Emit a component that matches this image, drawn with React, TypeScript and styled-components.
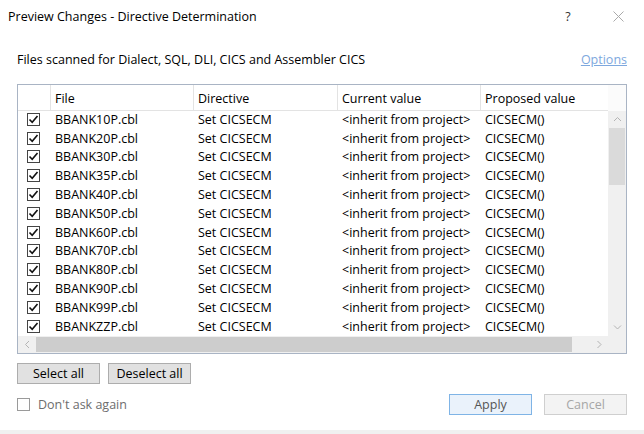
import React from "react";
import styled, { createGlobalStyle } from "styled-components";

const Global = createGlobalStyle`
  html, body { margin: 0; padding: 0; background: #fff; }
  body { font-family: "Open Sans", "Noto Sans", sans-serif; font-size: 12.5px; color: #000; }
  * { box-sizing: border-box; }
`;

const Dialog = styled.div`
  width: 644px;
  height: 434px;
  display: flex;
  flex-direction: column;
  background: #fff;
  overflow: hidden;
`;

const TitleBar = styled.div`
  height: 32px;
  display: flex;
  align-items: center;
  padding-left: 8px;
  padding-right: 3px;
`;

const Title = styled.div`
  flex: 1;
  color: #000;
`;

const TitleButton = styled.div<{ $w: number }>`
  width: ${(p) => p.$w}px;
  height: 32px;
  display: flex;
  align-items: center;
  justify-content: center;
  color: #333;
`;

const IntroRow = styled.div`
  margin-top: 17px;
  height: 20px;
  padding: 0 17px;
  display: flex;
  align-items: center;
  justify-content: space-between;
`;

const OptionsLink = styled.span`
  color: #7ea8de;
  text-decoration: underline;
`;

const GridFrame = styled.div`
  margin: 15px 17px 0 17px;
  height: 270px;
  border: 1px solid #a9b4c4;
  display: grid;
  grid-template-columns: 1fr 18px;
  grid-template-rows: 26px 1fr 17px;
  overflow: hidden;
`;

const cols = "33px 143px 144px 143px 126px";

const HeaderRow = styled.div`
  display: grid;
  grid-template-columns: ${cols};
  border-bottom: 1px solid #e3e3e3;
  background: #fff;
`;

const HeaderCell = styled.div`
  display: flex;
  align-items: center;
  padding-left: 4px;
  padding-top: 1px;
  border-right: 1px solid #e3e3e3;
  white-space: nowrap;
  overflow: hidden;
  &:last-child { border-right: none; }
`;

const CornerTop = styled.div`
  background: #fbfbfb;
`;

const Body = styled.div`
  overflow: hidden;
  margin-top: -1px;
`;

const Row = styled.div`
  display: grid;
  grid-template-columns: ${cols};
  height: 18.8px;
  align-items: center;
`;

const Cell = styled.div`
  padding-left: 4px;
  white-space: nowrap;
  overflow: hidden;
`;

const CheckCell = styled.div`
  display: flex;
  align-items: center;
  padding-left: 9px;
`;

const Box = styled.div<{ $light?: boolean }>`
  width: 13px;
  height: 13px;
  border: 1px solid ${(p) => (p.$light ? "#9a9a9a" : "#444")};
  background: #fff;
  display: flex;
  align-items: center;
  justify-content: center;
`;

const VScroll = styled.div`
  background: #f0f0f0;
  display: flex;
  flex-direction: column;
`;

const ArrowBtn = styled.div`
  width: 18px;
  height: 17px;
  display: flex;
  align-items: center;
  justify-content: center;
  flex: none;
`;

const VTrack = styled.div`
  flex: 1;
  padding: 0 1px;
`;

const VThumb = styled.div`
  height: 57px;
  background: #dadada;
`;

const HScroll = styled.div`
  background: #f0f0f0;
  display: flex;
  align-items: stretch;
`;

const HTrack = styled.div`
  flex: 1;
  padding: 1px 0;
`;

const HThumb = styled.div`
  width: 536px;
  height: 100%;
  background: #cdcdcd;
`;

const CornerBottom = styled.div`
  background: #f0f0f0;
`;

const ButtonRow = styled.div`
  margin: 9px 17px 0 17px;
  display: flex;
  gap: 8px;
`;

const Button = styled.button<{ $variant?: "default" | "primary" | "disabled" }>`
  width: 83px;
  height: 21px;
  font-family: inherit;
  font-size: 12.5px;
  padding: 0;
  background: ${(p) => (p.$variant === "primary" ? "#eaf2fb" : p.$variant === "disabled" ? "#f3f3f3" : "#e1e1e1")};
  border: 1px solid ${(p) => (p.$variant === "primary" ? "#7fb4e6" : p.$variant === "disabled" ? "#cfcfcf" : "#adadad")};
  color: ${(p) => (p.$variant === "primary" ? "#555" : p.$variant === "disabled" ? "#a6a6a6" : "#000")};
`;

const Footer = styled.div`
  margin: 10px 17px 0 17px;
  display: flex;
  align-items: center;
`;

const DontAsk = styled.label`
  flex: 1;
  display: flex;
  align-items: center;
  gap: 8px;
  color: #6d6d6d;
`;

const FooterButtons = styled.div`
  display: flex;
  gap: 12px;
`;

const BottomEdge = styled.div`
  margin-top: auto;
  height: 4px;
  background: #f0f0f0;
`;

const Check = () => (
  <svg width="11" height="11" viewBox="0 0 11 11">
    <path d="M1.5 5.5 L4.2 8.3 L9.5 2" fill="none" stroke="#111" strokeWidth="1.6" />
  </svg>
);

const Chevron = ({ dir }: { dir: "up" | "down" | "left" | "right" }) => {
  const d =
    dir === "up" ? "M1 5 L4.5 1.5 L8 5" :
    dir === "down" ? "M1 1.5 L4.5 5 L8 1.5" :
    dir === "left" ? "M5 1 L1.5 4.5 L5 8" : "M1.5 1 L5 4.5 L1.5 8";
  const w = dir === "up" || dir === "down" ? 9 : 7;
  const h = dir === "up" || dir === "down" ? 7 : 9;
  return (
    <svg width={w} height={h} viewBox={`0 0 ${w} ${h}`}>
      <path d={d} fill="none" stroke="#b4b4b4" strokeWidth="1" />
    </svg>
  );
};

const files = ["10", "20", "30", "35", "40", "50", "60", "70", "80", "90", "99", "ZZ"];

export default function App() {
  return (
    <>
      <Global />
      <Dialog>
        <TitleBar>
          <Title>Preview Changes - Directive Determination</Title>
          <TitleButton $w={54}>?</TitleButton>
          <TitleButton $w={46}>
            <svg width="11" height="11" viewBox="0 0 11 11">
              <path d="M0.5 0.5 L10.5 10.5 M10.5 0.5 L0.5 10.5" stroke="#aaa" strokeWidth="1" />
            </svg>
          </TitleButton>
        </TitleBar>
        <IntroRow>
          <span>Files scanned for Dialect, SQL, DLI, CICS and Assembler CICS</span>
          <OptionsLink>Options</OptionsLink>
        </IntroRow>
        <GridFrame>
          <HeaderRow>
            <HeaderCell />
            <HeaderCell>File</HeaderCell>
            <HeaderCell>Directive</HeaderCell>
            <HeaderCell>Current value</HeaderCell>
            <HeaderCell>Proposed value</HeaderCell>
          </HeaderRow>
          <CornerTop />
          <Body>
            {files.map((f) => (
              <Row key={f}>
                <CheckCell>
                  <Box>
                    <Check />
                  </Box>
                </CheckCell>
                <Cell>{`BBANK${f}P.cbl`}</Cell>
                <Cell>Set CICSECM</Cell>
                <Cell>{"<inherit from project>"}</Cell>
                <Cell>CICSECM()</Cell>
              </Row>
            ))}
          </Body>
          <VScroll>
            <ArrowBtn><Chevron dir="up" /></ArrowBtn>
            <VTrack><VThumb /></VTrack>
            <ArrowBtn><Chevron dir="down" /></ArrowBtn>
          </VScroll>
          <HScroll>
            <ArrowBtn><Chevron dir="left" /></ArrowBtn>
            <HTrack><HThumb /></HTrack>
            <ArrowBtn><Chevron dir="right" /></ArrowBtn>
          </HScroll>
          <CornerBottom />
        </GridFrame>
        <ButtonRow>
          <Button>Select all</Button>
          <Button>Deselect all</Button>
        </ButtonRow>
        <Footer>
          <DontAsk>
            <Box $light />
            Don't ask again
          </DontAsk>
          <FooterButtons>
            <Button $variant="primary">Apply</Button>
            <Button $variant="disabled">Cancel</Button>
          </FooterButtons>
        </Footer>
        <BottomEdge />
      </Dialog>
    </>
  );
}
